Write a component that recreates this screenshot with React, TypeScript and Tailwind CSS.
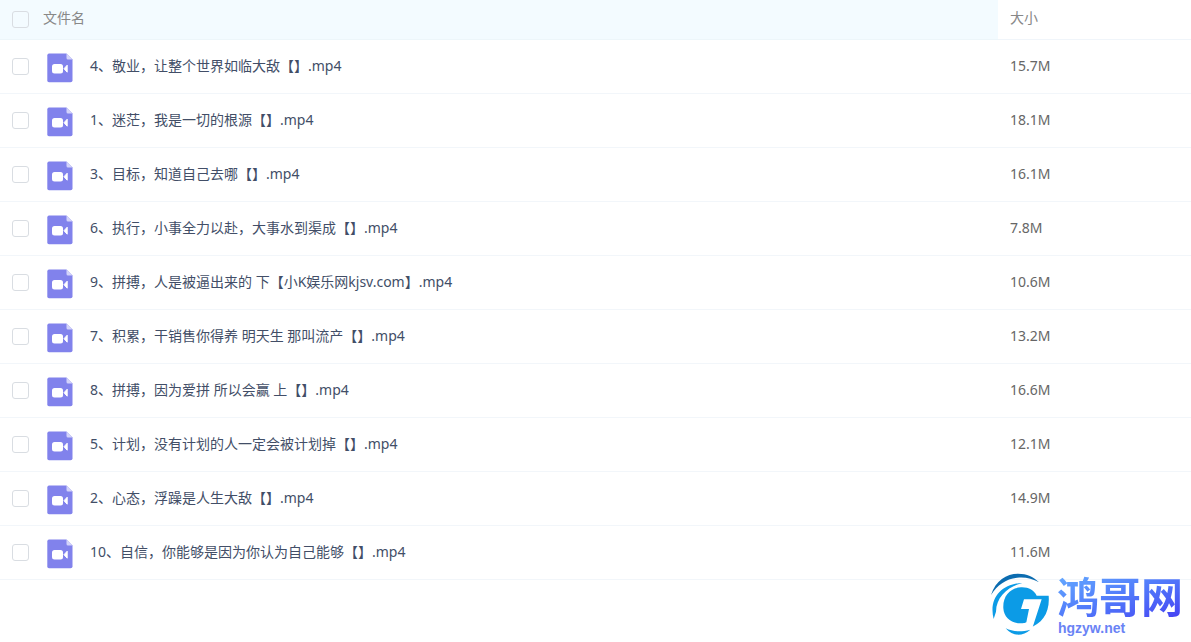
import React from 'react';

interface VideoFile {
  name: string;
  size: string;
}

const files: VideoFile[] = [
  { name: '4、敬业，让整个世界如临大敌【】.mp4', size: '15.7M' },
  { name: '1、迷茫，我是一切的根源【】.mp4', size: '18.1M' },
  { name: '3、目标，知道自己去哪【】.mp4', size: '16.1M' },
  { name: '6、执行，小事全力以赴，大事水到渠成【】.mp4', size: '7.8M' },
  { name: '9、拼搏，人是被逼出来的 下【小K娱乐网kjsv.com】.mp4', size: '10.6M' },
  { name: '7、积累，干销售你得养 明天生 那叫流产【】.mp4', size: '13.2M' },
  { name: '8、拼搏，因为爱拼 所以会赢 上【】.mp4', size: '16.6M' },
  { name: '5、计划，没有计划的人一定会被计划掉【】.mp4', size: '12.1M' },
  { name: '2、心态，浮躁是人生大敌【】.mp4', size: '14.9M' },
  { name: '10、自信，你能够是因为你认为自己能够【】.mp4', size: '11.6M' },
];

const Checkbox: React.FC<{ label: string }> = ({ label }) => (
  <input
    type="checkbox"
    aria-label={label}
    className="block size-[17px] shrink-0 appearance-none rounded-[3px] border border-[#d9dde2] bg-transparent checked:bg-[#8080ee]"
  />
);

const VideoIcon = () => (
  <svg viewBox="0 0 26 30" className="mt-0.5 h-[30px] w-[26px] shrink-0" aria-hidden="true">
    <path d="M2 0.5H19.5L25.5 6.5V27.5Q25.5 29.3 23.5 29.3H2Q0.3 29.3 0.3 27.5V2.5Q0.3 0.5 2 0.5Z" fill="#8182ec" />
    <path d="M19.5 0.5L25.5 6.5H21Q19.5 6.5 19.5 5Z" fill="#d3d3fa" />
    <rect x="5" y="11" width="11" height="9.5" rx="2.5" fill="#fff" />
    <path d="M17 15.7L20.2 12.2V19.2Z" fill="#fff" stroke="#fff" strokeLinejoin="round" />
  </svg>
);

const SiteLogo = () => (
  <div className="pointer-events-none absolute right-2 bottom-[3px] flex items-center">
    <svg viewBox="0 0 210 210" className="size-[70px] shrink-0" aria-hidden="true">
      <path d="M18 78C32 34 64 14 99 14C126 14 146 24 162 40C141 28 119 23 96 26C62 30 37 48 18 78Z" fill="#0b6cb0" />
      <path d="M26 150C10 88 50 44 112 42C68 53 34 84 33 128Z" fill="#0c9be6" />
      <path d="M55 118C53 80 76 56 108 55C130 54 148 64 155 80H191C195 130 173 164 130 178L120 162C82 168 57 148 55 118Z" fill="#0c9be6" />
      <path d="M117 91H170L142 178L126 184L100 170L124 160L132 120H108Z" fill="#fff" />
      <path d="M62 178C82 188 108 190 136 182C112 203 82 202 62 178Z" fill="#0c9be6" />
    </svg>
    <div className="pt-0.5 pl-0.5 font-['Liberation_Sans','Noto_Sans_CJK_SC',sans-serif] font-bold">
      <div className="bg-gradient-to-br from-[#65a9ff] to-[#4636f2] bg-clip-text text-[42px] leading-[46px] text-transparent">鸿哥网</div>
      <div className="pl-px text-[14px] leading-3 text-[#6a83f5]">hgzyw.net</div>
    </div>
  </div>
);

export default function App() {
  return (
    <main className="relative min-h-screen bg-white font-['Noto_Sans','Noto_Sans_CJK_SC',sans-serif] text-[14px] leading-5 text-[#424e67]">
      <table className="w-full table-fixed border-separate border-spacing-0">
        <thead>
          <tr className="h-10 text-left text-[#888]">
            <th className="border-b border-[#edf6fa] bg-[#f3fbff] p-0 pl-3 font-normal">
              <div className="flex items-center gap-[14px]">
                <Checkbox label="全选" />
                <span className="pb-1">文件名</span>
              </div>
            </th>
            <th className="w-[193px] border-b border-[#f0f5fa] p-0 pb-1 pl-3 font-normal">大小</th>
          </tr>
        </thead>
        <tbody>
          {files.map((file) => (
            <tr key={file.name} className="h-[54px]">
              <td className="border-b border-[#f2f6fa] p-0 pl-3">
                <div className="flex items-center">
                  <Checkbox label={file.name} />
                  <div className="flex items-center gap-[17px] pl-[18px]">
                    <VideoIcon />
                    <span className="pb-0.5">{file.name}</span>
                  </div>
                </div>
              </td>
              <td className="border-b border-[#f2f6fa] p-0 pb-0.5 pl-3 text-[#666]">{file.size}</td>
            </tr>
          ))}
        </tbody>
      </table>
      <SiteLogo />
    </main>
  );
}
